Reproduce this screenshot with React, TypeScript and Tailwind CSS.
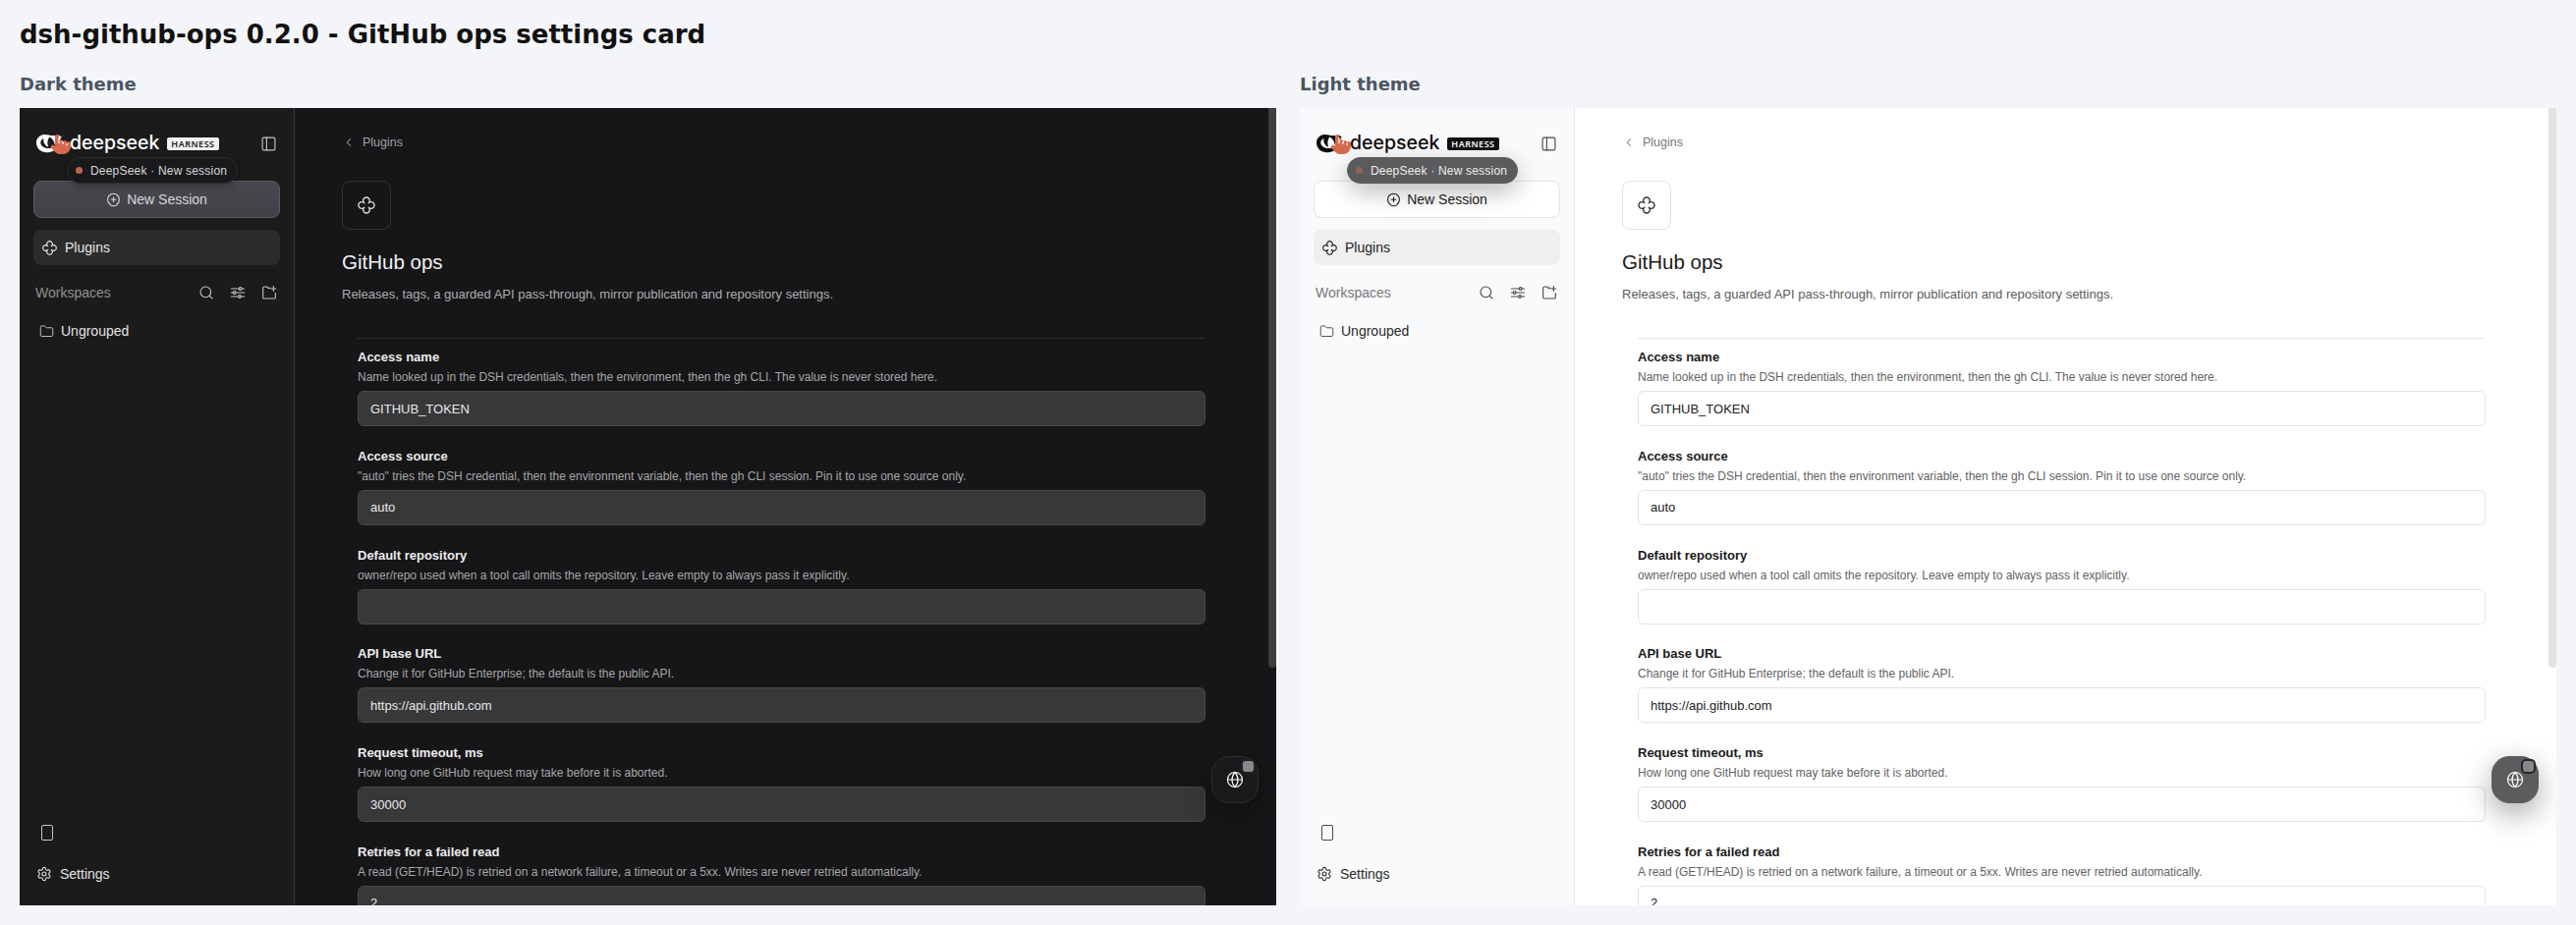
import { ChevronLeft, Folder, Globe, PanelLeft, Search, Settings } from "lucide-react";

const fields = [
  {
    label: "Access name",
    help: "Name looked up in the DSH credentials, then the environment, then the gh CLI. The value is never stored here.",
    value: "GITHUB_TOKEN",
  },
  {
    label: "Access source",
    help: '"auto" tries the DSH credential, then the environment variable, then the gh CLI session. Pin it to use one source only.',
    value: "auto",
  },
  {
    label: "Default repository",
    help: "owner/repo used when a tool call omits the repository. Leave empty to always pass it explicitly.",
    value: "",
  },
  {
    label: "API base URL",
    help: "Change it for GitHub Enterprise; the default is the public API.",
    value: "https://api.github.com",
  },
  {
    label: "Request timeout, ms",
    help: "How long one GitHub request may take before it is aborted.",
    value: "30000",
  },
  {
    label: "Retries for a failed read",
    help: "A read (GET/HEAD) is retried on a network failure, a timeout or a 5xx. Writes are never retried automatically.",
    value: "2",
  },
];

const themes = {
  dark: {
    panel: "bg-[#161618]",
    sidebar: "bg-[#1b1b1b] border-[#38383a]",
    logo: "text-white",
    badge: "bg-[#f2f2f2] text-[#1a1a1a]",
    pill: "bg-[#19191c] border-[#2e2e31] text-[#d8d8d8] shadow-[0_2px_8px_rgba(0,0,0,0.3)]",
    dot: "bg-[#bb6850]",
    session: "bg-gradient-to-b from-[#48494f] to-[#404147] border-[#5c5d62] text-[#d6d6d8]",
    item: "bg-[#2b2b2b] text-[#e6e6e6]",
    muted: "text-[#8f8f92]",
    icon: "text-[#c4c4c4]",
    text: "text-[#e4e4e4]",
    back: "text-[#a0a0a2]",
    box: "border-[#323235] text-[#dadada]",
    title: "text-[#f2f2f2]",
    desc: "text-[#adadaf]",
    rule: "border-[#2e2e30]",
    label: "text-[#ececec]",
    help: "text-[#a6a6a8]",
    input: "bg-[#37383a] border-[#47484a] text-[#e8e8e8]",
    thumb: "bg-[#3e3e3e]",
    fab: "bg-[#19191b] border-[#2e2e30] text-white shadow-[0_10px_30px_rgba(0,0,0,0.3)]",
    fabDot: "bg-[#87878b] border-[#202022]",
  },
  light: {
    panel: "bg-white",
    sidebar: "bg-[#f9fafc] border-[#e2e3e5]",
    logo: "text-[#0c0c0c]",
    badge: "bg-[#111111] text-white",
    pill: "bg-[#5b5b5d] border-[#5b5b5d] text-[#eeeeee] shadow-[0_8px_24px_rgba(0,0,0,0.28)]",
    dot: "bg-[#8d6659]",
    session: "bg-white border-[#e2e3e5] text-[#222222]",
    item: "bg-[#eeeff1] text-[#222222]",
    muted: "text-[#77777a]",
    icon: "text-[#4a4a4c]",
    text: "text-[#2a2a2a]",
    back: "text-[#77777a]",
    box: "border-[#e2e3e5] text-[#333333]",
    title: "text-[#1a1a1a]",
    desc: "text-[#5c5c5e]",
    rule: "border-[#e6e6e8]",
    label: "text-[#1a1a1a]",
    help: "text-[#636365]",
    input: "bg-white border-[#e3e3e5] text-[#222222]",
    thumb: "bg-[#e3e3e3]",
    fab: "bg-[#5c5c5e] border-[#5c5c5e] text-white shadow-[0_10px_30px_rgba(0,0,0,0.35)]",
    fabDot: "bg-[#87878b] border-[#26262a]",
  },
};

function PluginIcon({ className }: { className?: string }) {
  return (
    <svg viewBox="0 0 24 24" fill="none" stroke="currentColor" strokeWidth="1.6" strokeLinejoin="round" className={className}>
      <path d="M9.400 9.400A4 4 0 1 1 14.600 9.400A4 4 0 1 1 14.600 14.600A4 4 0 1 1 9.400 14.600A4 4 0 1 1 9.400 9.400Z" />
    </svg>
  );
}

function SessionIcon({ className }: { className?: string }) {
  return (
    <svg viewBox="0 0 24 24" fill="none" stroke="currentColor" strokeWidth="1.8" strokeLinecap="round" className={className}>
      <path d="M6.500 19.200A9.500 9.500 0 1 1 17.500 19.200" />
      <path d="M7 20.500Q12 23.500 17.500 20.600" />
      <path d="M12 8v7M8.500 11.500h7" />
    </svg>
  );
}

function SlidersIcon({ className }: { className?: string }) {
  return (
    <svg viewBox="0 0 24 24" fill="none" stroke="currentColor" strokeWidth="1.7" strokeLinecap="round" className={className}>
      <path d="M2 6h12M18 6h4M2 12h3M9 12h13M2 18h11M17 18h5" />
      <circle cx="16" cy="6" r="2" />
      <circle cx="7" cy="12" r="2" />
      <circle cx="15" cy="18" r="2" />
    </svg>
  );
}

function FolderPlusIcon({ className }: { className?: string }) {
  return (
    <svg viewBox="0 0 24 24" fill="none" stroke="currentColor" strokeWidth="1.7" strokeLinecap="round" strokeLinejoin="round" className={className}>
      <path d="M13.500 5h-3L8.500 3h-4A2 2 0 0 0 2.500 5v14a2 2 0 0 0 2 2h15a2 2 0 0 0 2-2v-6" />
      <path d="M18.500 2.500v7M15 6h7" />
    </svg>
  );
}

function WhaleMark({ className }: { className?: string }) {
  return (
    <svg viewBox="0 0 30 24" fill="currentColor" className={className}>
      <path d="M29 4c-.5 0-1 .7-1.600.9C26.500 3 24.300 2.500 23 4c-1.500-.5-5-1-6.500-.4C15 2.800 10 1.500 6.500 2.700 2.500 4 0 7.500.3 12c.3 5 4.200 9.500 10.700 10 4.500.3 9-1.400 11.500-3.700l-3-2.300C15 18.500 9 18 6.200 14.500 4 11.500 5 7.500 8.500 6.500c-1 3 .5 7.500 5 9.500-1.500-4-1-8.500 1.500-11 3 1.500 5 4.500 5.500 8 2 0 3.500-1.500 4-3.500 1.500-1 3.500-3.500 4.500-6.500z" />
    </svg>
  );
}

function HandCursor({ className }: { className?: string }) {
  return (
    <svg viewBox="0 0 24 24" className={className}>
      <path
        d="M6 14V4a2 2 0 0 1 4 0v5a2 2 0 0 1 4 0v1a2 2 0 0 1 4 0v1a2 2 0 0 1 4 0v3a8 8 0 0 1-8 8h-2c-2.800 0-4.500-.86-6-2.340l-3.600-3.600a2 2 0 0 1 2.830-2.820z"
        fill="#d56b4c"
      />
      <path d="M10 5v6M14 9v3M18 11v2" stroke="#ffffff" strokeWidth="1.2" fill="none" />
    </svg>
  );
}

function DevicePanel({ mode }: { mode: "dark" | "light" }) {
  const t = themes[mode];
  return (
    <div className={`relative flex h-[812px] overflow-hidden ${t.panel}`}>
      <aside className={`flex w-[280px] shrink-0 flex-col border-r pt-7 ${t.sidebar}`}>
        <div className="flex h-4 items-center justify-between pl-4 pr-[17px]">
          <div className="relative flex items-center">
            <WhaleMark className={`h-[22px] w-[29px] ${t.logo}`} />
            <span className={`ml-1.5 font-['Inter',sans-serif] text-[19.5px] leading-none font-medium ${t.logo}`}>deepseek</span>
            <span className={`ml-2 rounded-[2px] px-1 font-['Noto_Sans',sans-serif] text-[9px] leading-[13px] font-semibold tracking-[0.5px] ${t.badge}`}>
              HARNESS
            </span>
            <HandCursor className="absolute top-0 left-[14px] size-6" />
          </div>
          <PanelLeft className={`size-[17px] ${t.icon}`} strokeWidth={1.6} />
        </div>

        <button className={`mx-3.5 mt-[30px] flex h-[38px] items-center justify-center gap-1.5 rounded-lg border text-sm ${t.session}`}>
          <SessionIcon className="size-[15px]" />
          New Session
        </button>

        <div className={`mx-3.5 mt-3 flex h-9 items-center gap-[7px] rounded-lg pl-2 text-sm ${t.item}`}>
          <PluginIcon className="size-[17px]" />
          Plugins
        </div>

        <div className="mt-4 flex h-6 items-center justify-between pl-4 pr-[17px]">
          <span className={`text-sm ${t.muted}`}>Workspaces</span>
          <div className={`flex items-center gap-4 ${t.icon}`}>
            <Search className="size-[16px]" strokeWidth={1.6} />
            <SlidersIcon className="size-[16px]" />
            <FolderPlusIcon className="size-[16px]" />
          </div>
        </div>

        <div className={`mt-[15px] flex h-6 items-center gap-[7px] pl-[20px] text-sm ${t.text}`}>
          <Folder className={`size-[15px] ${t.icon}`} strokeWidth={1.5} />
          Ungrouped
        </div>

        <div className="mt-auto flex flex-col pb-[22px]">
          <div className={`mb-[24px] pl-[22px] ${t.icon}`}>
            <div className="h-4 w-3 rounded-[2px] border-[1.5px] border-current" />
          </div>
          <div className={`flex h-5 items-center gap-2 pl-[17px] text-sm ${t.text}`}>
            <Settings className="size-4" strokeWidth={1.6} />
            Settings
          </div>
        </div>
      </aside>

      <main className="min-w-0 flex-1 overflow-hidden pt-[26px] pr-12 pl-12">
        <div className={`flex h-[18px] items-center gap-[7px] text-[12.5px] ${t.back}`}>
          <ChevronLeft className="size-[14px]" strokeWidth={1.8} />
          Plugins
        </div>
        <div className={`mt-[30px] flex size-[50px] items-center justify-center rounded-lg border ${t.box}`}>
          <PluginIcon className="size-[20px]" />
        </div>
        <h2 className={`mt-[19px] text-[20.5px] leading-7 ${t.title}`}>GitHub ops</h2>
        <p className={`mt-[9px] text-[13px] leading-5 ${t.desc}`}>
          Releases, tags, a guarded API pass-through, mirror publication and repository settings.
        </p>

        <div className={`mx-4 mt-[34px] flex flex-col gap-[20.8px] border-t pt-[9px] ${t.rule}`}>
          {fields.map((f) => (
            <div key={f.label}>
              <div className={`text-[13px] leading-5 font-bold ${t.label}`}>{f.label}</div>
              <div className={`text-xs leading-5 ${t.help}`}>{f.help}</div>
              <input
                readOnly
                value={f.value}
                className={`mt-1 block h-9 w-full rounded-md border px-3 text-[13px] outline-none ${t.input}`}
              />
            </div>
          ))}
        </div>
      </main>

      <div className="w-2 shrink-0">
        <div className={`h-[570px] rounded-b-sm ${t.thumb}`} />
      </div>

      <div className={`absolute top-[660px] right-[18px] flex size-12 items-center justify-center rounded-[18px] border ${t.fab}`}>
        <Globe className="size-[18px]" strokeWidth={1.6} />
        <span className={`absolute top-[2px] right-[2px] size-[15px] rounded-[5px] border-2 ${t.fabDot}`} />
      </div>

      <div className={`absolute top-[50px] left-12 flex h-[27px] w-[174px] items-center gap-2 rounded-full border pl-2 text-xs tracking-[0.2px] whitespace-nowrap ${t.pill}`}>
        <span className={`size-[7px] rounded-full ${t.dot}`} />
        DeepSeek · New session
      </div>
    </div>
  );
}

export default function App() {
  return (
    <div className="min-h-screen bg-[#f4f5f8] px-5 pt-[18px] font-['Liberation_Sans',Arial,sans-serif]">
      <h1 className="font-['DejaVu_Sans',sans-serif] text-[26px] leading-[34px] font-bold text-[#111111]">
        dsh-github-ops 0.2.0 - GitHub ops settings card
      </h1>
      <div className="mt-[23px] grid grid-cols-2 gap-6">
        <section>
          <h3 className="mb-[13px] font-['DejaVu_Sans',sans-serif] text-lg leading-[22px] font-bold text-[#4b5563]">Dark theme</h3>
          <DevicePanel mode="dark" />
        </section>
        <section>
          <h3 className="mb-[13px] font-['DejaVu_Sans',sans-serif] text-lg leading-[22px] font-bold text-[#4b5563]">Light theme</h3>
          <DevicePanel mode="light" />
        </section>
      </div>
    </div>
  );
}
